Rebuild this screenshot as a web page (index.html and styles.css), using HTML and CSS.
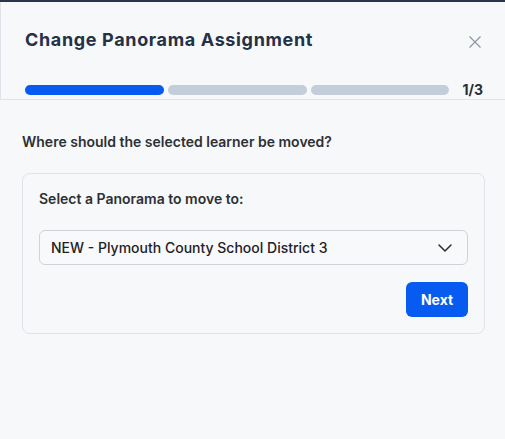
FILE: index.html
```html
<!DOCTYPE html>
<html lang="en">
<head>
<meta charset="utf-8">
<title>Change Panorama Assignment</title>
<link rel="stylesheet" href="styles.css">
</head>
<body>
<div class="topbar"></div>
<header class="header">
  <div class="title-row">
    <h1 class="title">Change Panorama Assignment</h1>
    <button class="close" aria-label="Close">
      <svg width="12" height="12" viewBox="0 0 12 12"><path d="M0.5 0.5 L11.5 11.5 M11.5 0.5 L0.5 11.5" stroke="#8a94a3" stroke-width="1.1" fill="none"/></svg>
    </button>
  </div>
  <div class="progress-row">
    <div class="bars">
      <div class="bar active"></div>
      <div class="bar"></div>
      <div class="bar"></div>
    </div>
    <span class="step">1/3</span>
  </div>
</header>
<main class="content">
  <p class="question">Where should the selected learner be moved?</p>
  <section class="card">
    <label class="label">Select a Panorama to move to:</label>
    <div class="select">
      <span class="select-value">NEW - Plymouth County School District 3</span>
      <svg class="chevron" width="14" height="8" viewBox="0 0 14 8"><path d="M1 1 L7 7 L13 1" stroke="#2a2d33" stroke-width="1.5" fill="none" stroke-linecap="round" stroke-linejoin="round"/></svg>
    </div>
    <div class="actions">
      <button class="next">Next</button>
    </div>
  </section>
</main>
</body>
</html>
```

FILE: styles.css
```css
* { box-sizing: border-box; }
html, body { margin: 0; padding: 0; }
body {
  background: #f7f8fa;
  font-family: Inter, "Noto Sans", sans-serif;
  color: #2d2f33;
  width: 505px;
  height: 439px;
  overflow: hidden;
}
.topbar {
  height: 2px;
  background: #2b3648;
}
.header {
  border-left: 1px solid #dfe4ea;
  border-bottom: 1px solid #dfe4ea;
  padding: 26px 22px 0 24px;
  height: 98px;
}
.title-row {
  display: flex;
  align-items: center;
  justify-content: space-between;
}
.title {
  margin: 0;
  font-size: 18px;
  line-height: 24px;
  font-weight: 700;
  color: #253145;
  letter-spacing: 0.65px;
}
.close {
  border: 0;
  background: none;
  padding: 0;
  margin: 3px 2px 0 0;
  width: 12px;
  height: 12px;
  display: flex;
}
.progress-row {
  display: flex;
  align-items: center;
  margin-top: 29px;
  height: 18px;
}
.bars {
  flex: 1;
  display: flex;
  gap: 4px;
}
.bar {
  flex: 1;
  height: 10px;
  border-radius: 5px;
  background: #c4cedb;
}
.bar.active { background: #075bf0; }
.step {
  margin-left: 13px;
  font-size: 14px;
  font-weight: 700;
  line-height: 18px;
  color: #2a2d33;
}
.content {
  padding: 33px 20px 0 22px;
}
.question {
  margin: 0;
  font-size: 14px;
  line-height: 18px;
  font-weight: 600;
  color: #2e3034;
}
.card {
  margin-top: 22px;
  border: 1px solid #dfe3ea;
  border-radius: 8px;
  padding: 16px 16px 16px 16px;
  display: flex;
  flex-direction: column;
}
.label {
  font-size: 14px;
  line-height: 18px;
  font-weight: 600;
  color: #2e3034;
}
.select {
  margin-top: 22px;
  height: 35px;
  border: 1px solid #cfd3d9;
  border-radius: 6px;
  background: #f8f9fb;
  display: flex;
  align-items: center;
  justify-content: space-between;
  padding: 0 15px 0 11px;
}
.select-value {
  font-size: 14px;
  font-weight: 500;
  color: #1f2125;
}
.chevron { display: block; }
.actions {
  display: flex;
  justify-content: flex-end;
  margin-top: 17px;
}
.next {
  width: 62px;
  height: 35px;
  border: 0;
  border-radius: 6px;
  background: #075bf0;
  color: #ffffff;
  font-family: Inter, "Noto Sans", sans-serif;
  font-size: 14px;
  font-weight: 700;
  padding: 0;
}
```
